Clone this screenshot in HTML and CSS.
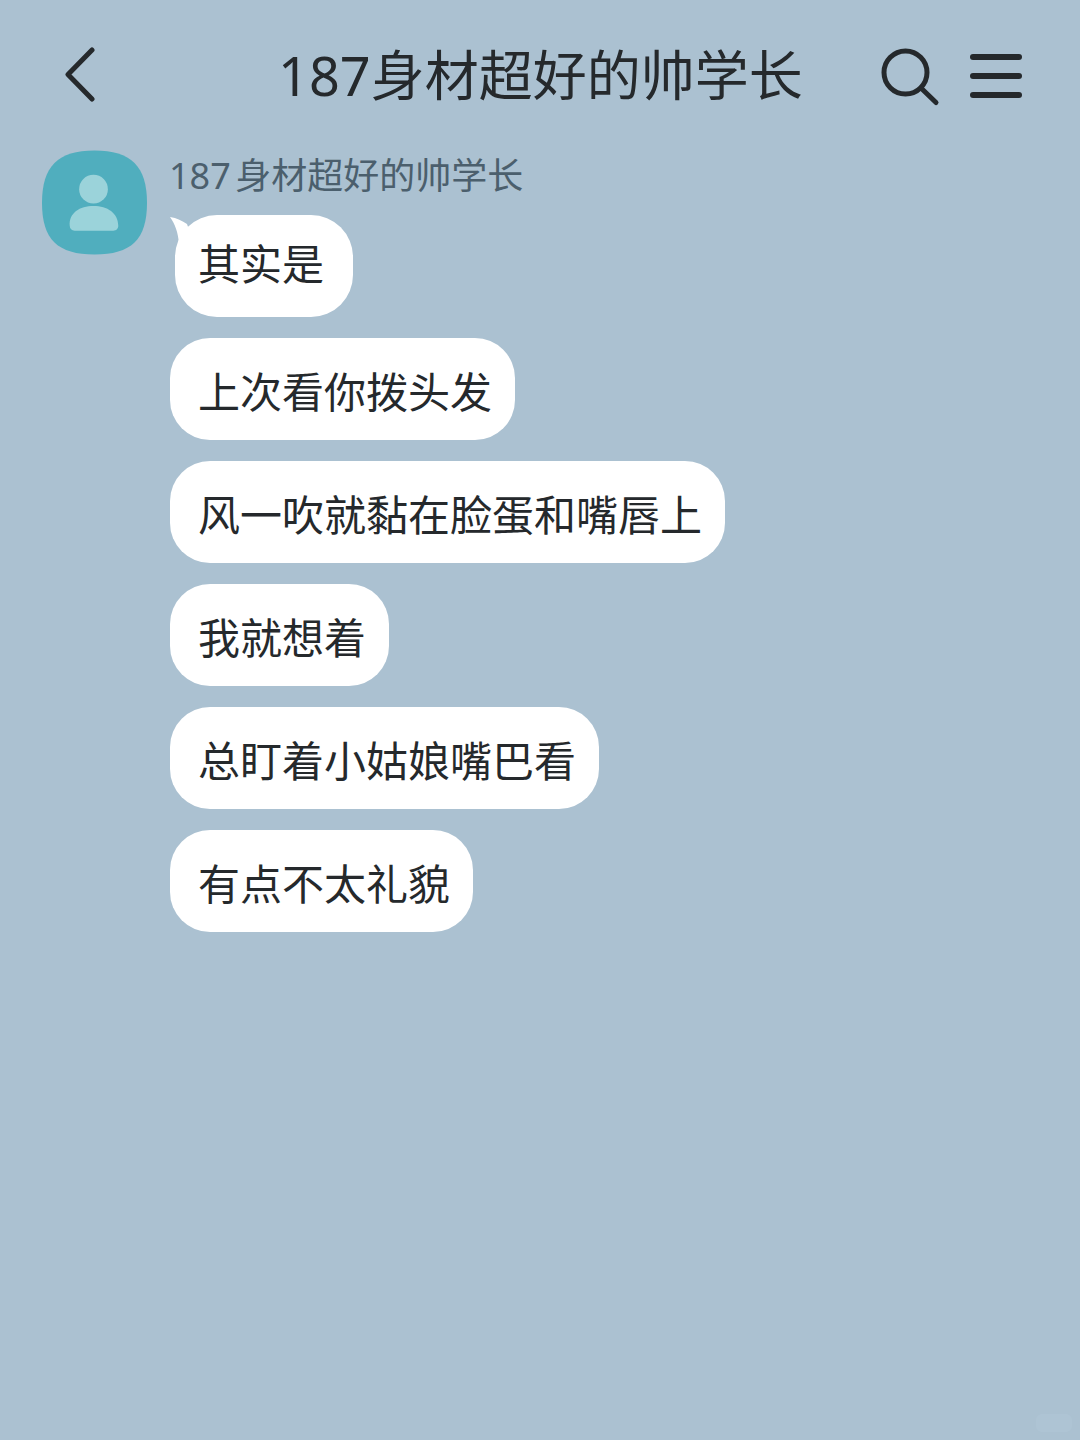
FILE: index.html
```html
<!DOCTYPE html>
<html lang="zh-CN">
<head>
    <meta charset="UTF-8">
    <title>187身材超好的帅学长</title>
    <link rel="stylesheet" href="styles.css">
</head>
<body>
    <header class="topbar">
        <svg class="back" width="34" height="56" viewBox="0 0 34 56">
            <path d="M29 3 L5 27.5 L29 52" fill="none" stroke="#25292c" stroke-width="5" stroke-linecap="round" stroke-linejoin="round"/>
        </svg>
        <h1 class="title">187身材超好的帅学长</h1>
        <svg class="search" width="60" height="60" viewBox="0 0 60 60">
            <circle cx="25.5" cy="25.5" r="21.5" fill="none" stroke="#25292c" stroke-width="5"/>
            <path d="M41 41 L56 55.5" fill="none" stroke="#25292c" stroke-width="5" stroke-linecap="round"/>
        </svg>
        <div class="menu">
            <span></span>
            <span></span>
            <span></span>
        </div>
    </header>

    <main class="chat">
        <svg class="avatar" width="105" height="106" viewBox="0 0 106 106">
            <path d="M53 0 C90 0 106 16 106 53 C106 90 90 105 53 105 C16 105 0 90 0 53 C0 16 16 0 53 0 Z" fill="#50aebe"/>
            <circle cx="52" cy="39" r="14.5" fill="#9bd3da"/>
            <path d="M28 76 C27 63 38 56 52 56 C66 56 77 63 77 76 C77 79 75 81 72 81 L33 81 C30 81 28 79 28 76 Z" fill="#9bd3da"/>
        </svg>
        <div class="thread">
            <div class="name">187 身材超好的帅学长</div>
            <div class="bubble first">
                <svg class="tail" width="24" height="30" viewBox="0 0 24 30">
                    <path d="M0 3 C7 4 12 7 17 10 L24 30 L9 30 C8 18 5 10 0 3 Z" fill="#fff"/>
                </svg>
                其实是
            </div>
            <div class="bubble">上次看你拨头发</div>
            <div class="bubble">风一吹就黏在脸蛋和嘴唇上</div>
            <div class="bubble">我就想着</div>
            <div class="bubble">总盯着小姑娘嘴巴看</div>
            <div class="bubble">有点不太礼貌</div>
        </div>
    </main>

    <div class="watermark"></div>
</body>
</html>
```

FILE: styles.css
```css
body{
    margin: 0;
    width: 1080px;
    height: 1440px;
    overflow: hidden;
    position: relative;
    background-color: #abc1d1;
    color: #25292c;
    font-family: "Noto Sans", "Noto Sans CJK SC", sans-serif;
}
.topbar{
    display: flex;
    align-items: center;
    height: 60px;
    padding: 45px 57px 1px 63px;
}
.back{
    flex: none;
}
.title{
    margin: 0 0 0 181px;
    width: 603px;
    font-size: 54px;
    font-weight: 400;
    line-height: 58px;
    white-space: nowrap;
}
.search{
    flex: none;
    margin: 3px 0 0 -1px;
}
.menu{
    display: flex;
    flex-direction: column;
    gap: 13px;
    width: 52px;
    margin: 1px 0 0 30px;
}
.menu span{
    height: 6px;
    border-radius: 3px;
    background-color: #25292c;
}
.chat{
    display: flex;
    padding: 44px 0 0 42px;
}
.avatar{
    flex: none;
}
.thread{
    display: flex;
    flex-direction: column;
    align-items: flex-start;
    margin-left: 23px;
}
.name{
    height: 65px;
    margin-left: -1px;
    font-size: 36px;
    font-weight: 400;
    line-height: 52px;
    word-spacing: -5px;
    color: #4b5f6d;
    white-space: nowrap;
}
.bubble{
    position: relative;
    height: 102px;
    margin-bottom: 21px;
    padding: 0 23px 0 28px;
    border-radius: 40px;
    background-color: #fff;
    font-size: 42px;
    font-weight: 400;
    line-height: 108px;
    white-space: nowrap;
}
.first{
    margin-left: 5px;
    padding: 0 29px 0 23px;
    border-radius: 42px;
    line-height: 98px;
}
.tail{
    position: absolute;
    left: -5px;
    top: -1px;
}
.watermark{
    position: absolute;
    right: 8px;
    bottom: 8px;
    width: 36px;
    height: 18px;
    border-radius: 6px;
    background-color: #aec4d4;
}
```
